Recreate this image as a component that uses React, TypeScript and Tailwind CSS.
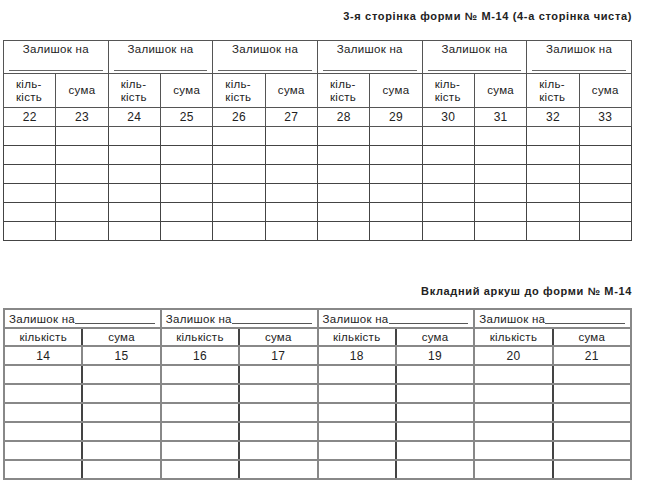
const TOP_GROUPS = [
  [22, 23],
  [24, 25],
  [26, 27],
  [28, 29],
  [30, 31],
  [32, 33],
];

const BOTTOM_GROUPS = [
  [14, 15],
  [16, 17],
  [18, 19],
  [20, 21],
];

const ROWS = [0, 1, 2, 3, 4, 5];

export default function App() {
  return (
    <div className="h-[500px] w-[650px] bg-white pl-[3px] text-[#222] [font-family:'Liberation_Sans',Arial,sans-serif]">
      <div className="w-[629px]">
        <p className="pt-[9px] text-right text-[11px] font-bold leading-[14px] tracking-[0.65px]">
          3-я сторінка форми № М-14 (4-а сторінка чиста)
        </p>

        <table className="mt-[17px] w-[629px] table-fixed border-collapse text-[11.5px] tracking-[0.3px]">
          <tbody>
            <tr className="h-[33px]">
              {TOP_GROUPS.map((g) => (
                <td key={g[0]} colSpan={2} className="border border-[#555] p-0 align-top">
                  <div className="flex h-[32px] flex-col">
                    <span className="pt-[1px] text-center leading-[14px]">Залишок на</span>
                    <span className="mx-[5px] mt-[14px] border-b border-[#666]" />
                  </div>
                </td>
              ))}
            </tr>
            <tr className="h-[34px]">
              {TOP_GROUPS.map((g) => [
                <td key={`k${g[0]}`} className="border border-[#555] pl-[12px] text-left leading-[13px]">
                  кіль-
                  <br />
                  кість
                </td>,
                <td key={`s${g[0]}`} className="border border-[#555] text-center">
                  сума
                </td>,
              ])}
            </tr>
            <tr className="h-[19px]">
              {TOP_GROUPS.map((g) =>
                g.map((n) => (
                  <td key={n} className="border border-[#555] text-center text-[12px] leading-[14px]">
                    {n}
                  </td>
                ))
              )}
            </tr>
            {ROWS.map((r) => (
              <tr key={r} className="h-[19px]">
                {TOP_GROUPS.map((g) =>
                  g.map((n) => <td key={n} className="border border-[#444]" />)
                )}
              </tr>
            ))}
          </tbody>
        </table>

        <p className="mt-[43px] text-right text-[11px] font-bold leading-[14px] tracking-[0.65px]">
          Вкладний аркуш до форми № М-14
        </p>

        <table className="mt-[10px] w-[629px] table-fixed border-collapse text-[11.5px] tracking-[0.3px]">
          <tbody>
            <tr className="h-[19px]">
              {BOTTOM_GROUPS.map((g) => (
                <td key={g[0]} colSpan={2} className="border-2 border-[#888] p-0">
                  <div className="flex items-end pl-[4px] pr-[5px] leading-[14px]">
                    <span>Залишок на</span>
                    <span className="mb-[2px] flex-1 border-b border-[#555]" />
                  </div>
                </td>
              ))}
            </tr>
            <tr className="h-[18px]">
              {BOTTOM_GROUPS.map((g) => [
                <td key={`k${g[0]}`} className="border-2 border-[#888] border-r-[#444] text-center leading-[14px]">
                  кількість
                </td>,
                <td key={`s${g[0]}`} className="border-2 border-[#888] text-center leading-[14px]">
                  сума
                </td>,
              ])}
            </tr>
            <tr className="h-[19px]">
              {BOTTOM_GROUPS.map((g) =>
                g.map((n) => (
                  <td key={n} className="border-2 border-[#888] text-center text-[12px] leading-[14px]">
                    {n}
                  </td>
                ))
              )}
            </tr>
            {ROWS.map((r) => (
              <tr key={r} className="h-[19px]">
                {BOTTOM_GROUPS.map((g) =>
                  g.map((n, i) => (
                    <td
                      key={n}
                      className={i === 0 ? "border-2 border-[#888] border-r-[#444]" : "border-2 border-[#888]"}
                    />
                  ))
                )}
              </tr>
            ))}
          </tbody>
        </table>
      </div>
    </div>
  );
}
